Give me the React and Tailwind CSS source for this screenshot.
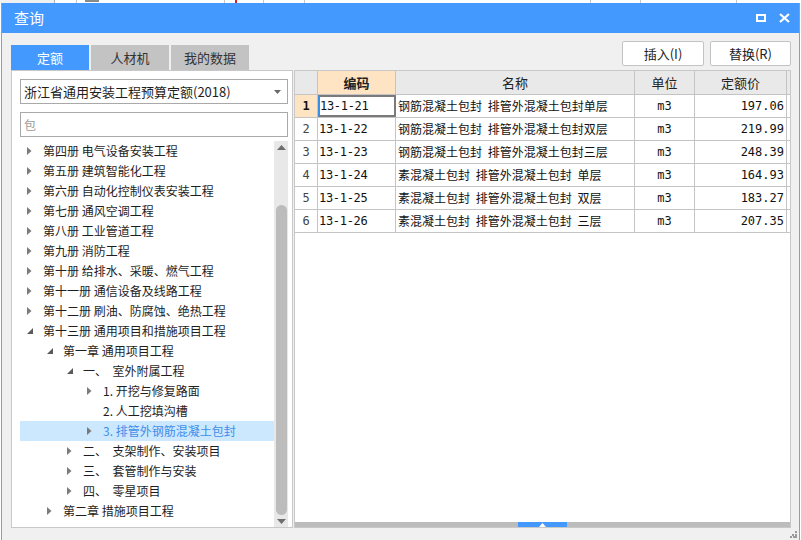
import React from 'react'

const FONT = { fontFamily: '"Noto Sans CJK SC", "Noto Sans", sans-serif' }
const MONO = { fontFamily: '"DejaVu Sans Mono", "Noto Sans CJK SC", monospace' }

const INDENT = ['pl-[7px]', 'pl-[27px]', 'pl-[47px]', 'pl-[67px]']

const treeRows = [
  { level: 0, arrow: 'right', text: '第四册 电气设备安装工程' },
  { level: 0, arrow: 'right', text: '第五册 建筑智能化工程' },
  { level: 0, arrow: 'right', text: '第六册 自动化控制仪表安装工程' },
  { level: 0, arrow: 'right', text: '第七册 通风空调工程' },
  { level: 0, arrow: 'right', text: '第八册 工业管道工程' },
  { level: 0, arrow: 'right', text: '第九册 消防工程' },
  { level: 0, arrow: 'right', text: '第十册 给排水、采暖、燃气工程' },
  { level: 0, arrow: 'right', text: '第十一册 通信设备及线路工程' },
  { level: 0, arrow: 'right', text: '第十二册 刷油、防腐蚀、绝热工程' },
  { level: 0, arrow: 'down', text: '第十三册 通用项目和措施项目工程' },
  { level: 1, arrow: 'down', text: '第一章 通用项目工程' },
  { level: 2, arrow: 'down', text: '一、\u00a0\u00a0室外附属工程' },
  { level: 3, arrow: 'right', text: '1. 开挖与修复路面' },
  { level: 3, arrow: null, text: '2. 人工挖填沟槽' },
  { level: 3, arrow: 'right', text: '3. 排管外钢筋混凝土包封', selected: true },
  { level: 2, arrow: 'right', text: '二、\u00a0\u00a0支架制作、安装项目' },
  { level: 2, arrow: 'right', text: '三、\u00a0\u00a0套管制作与安装' },
  { level: 2, arrow: 'right', text: '四、\u00a0\u00a0零星项目' },
  { level: 1, arrow: 'right', text: '第二章 措施项目工程' },
]

const tableRows = [
  ['13-1-21', '钢筋混凝土包封 排管外混凝土包封单层', 'm3', '197.06'],
  ['13-1-22', '钢筋混凝土包封 排管外混凝土包封双层', 'm3', '219.99'],
  ['13-1-23', '钢筋混凝土包封 排管外混凝土包封三层', 'm3', '248.39'],
  ['13-1-24', '素混凝土包封 排管外混凝土包封 单层', 'm3', '164.93'],
  ['13-1-25', '素混凝土包封 排管外混凝土包封 双层', 'm3', '183.27'],
  ['13-1-26', '素混凝土包封 排管外混凝土包封 三层', 'm3', '207.35'],
]

const Arrow = ({ type }) => {
  if (type === 'right') {
    return (
      <svg width="5" height="8" viewBox="0 0 5 8">
        <polygon points="0,0 4.5,4 0,8" fill="#7b7b7b" />
      </svg>
    )
  }
  if (type === 'down') {
    return (
      <svg width="6" height="6" viewBox="0 0 6 6">
        <polygon points="6,0 6,6 0,6" fill="#5a5a5a" />
      </svg>
    )
  }
  return null
}

const TreeRow = ({ row }) => (
  <div
    className={`flex h-[20px] items-center ${INDENT[row.level]} ${
      row.selected ? 'bg-[#cce8ff] text-[#3d8ee8]' : 'text-[#1e1e1e]'
    }`}
  >
    <span className="flex w-[16px] shrink-0 items-center">
      <Arrow type={row.arrow} />
    </span>
    <span className="whitespace-nowrap text-[12px] leading-none">{row.text}</span>
  </div>
)

const App = () => {
  return (
    <div className="h-[540px] w-[801px] overflow-hidden bg-white" style={FONT}>
      {/* sheet behind the dialog */}
      <div className="flex h-[3px] bg-white">
        <div className="w-[55px] border-r border-[#b0b0b0] bg-[#f0f0f0]" />
        <div className="w-[22px] border-r border-[#c8c8c8]" />
        <div className="ml-[8px] h-[2px] w-[14px] bg-[#8a8a8a]" />
        <div className="w-[126px] border-r border-[#c8c8c8]" />
        <div className="w-[12px] border-r-2 border-[#e02020]" />
        <div className="w-[27px] border-r border-[#c8c8c8]" />
        <div className="w-[41px] border-r border-[#c8c8c8]" />
        <div className="w-[286px] border-r border-[#c8c8c8]" />
        <div className="w-[50px] border-r border-[#c8c8c8]" />
        <div className="w-[96px] border-r border-[#c8c8c8]" />
      </div>

      <div className="ml-[1px] flex h-[537px] w-[799px] flex-col border-x border-[#9c9c9c]">
        {/* title bar */}
        <div className="flex h-[30px] items-center justify-between bg-[#4499ff] pl-[12px] pr-[9px] text-white">
          <span className="text-[15px]">查询</span>
          <div className="flex items-center gap-[13px]">
            <div className="h-[8px] w-[10px] border-2 border-white" />
            <svg width="11" height="10" viewBox="0 0 11 10">
              <path d="M1 1 L10 9 M10 1 L1 9" stroke="white" strokeWidth="2.2" />
            </svg>
          </div>
        </div>

        {/* body */}
        <div className="flex flex-1 flex-col bg-[#f0f0f0] pl-[9px] pr-[8px]">
          <div className="flex h-[37px] shrink-0 justify-between">
            <div className="flex shrink-0 items-end gap-[2px]">
              <div className="flex h-[25px] w-[78px] shrink-0 items-center justify-center bg-[#4499ff] text-[13px] text-white">
                定额
              </div>
              <div className="flex h-[25px] w-[78px] shrink-0 items-center justify-center bg-[#c3c3c3] text-[13px] text-[#333]">
                人材机
              </div>
              <div className="flex h-[25px] w-[78px] shrink-0 items-center justify-center bg-[#c3c3c3] text-[13px] text-[#333]">
                我的数据
              </div>
            </div>
            <div className="mt-[8px] flex shrink-0 gap-[6px]">
              <button className="h-[25px] w-[82px] rounded-[2px] border border-[#c3c3c3] bg-white text-[13px] text-[#222]">
                插入(I)
              </button>
              <button className="h-[25px] w-[81px] rounded-[2px] border border-[#c3c3c3] bg-white text-[13px] text-[#222]">
                替换(R)
              </button>
            </div>
          </div>

          <div className="flex h-[458px] shrink-0 gap-[1px]">
            {/* left panel */}
            <div className="flex w-[282px] shrink-0 flex-col border border-[#c8c8c8] bg-white pl-[8px] pr-[4px] pt-[8px]">
              <div className="flex h-[25px] items-center justify-between border border-[#a9a9a9] pl-[3px] pr-[6px]">
                <span className="text-[13px] text-[#1e1e1e]">浙江省通用安装工程预算定额(2018)</span>
                <svg width="7" height="4" viewBox="0 0 7 4">
                  <polygon points="0,0 7,0 3.5,4" fill="#6a6a6a" />
                </svg>
              </div>
              <div className="mt-[8px] flex h-[25px] items-center border border-[#a9a9a9] pl-[3px]">
                <span className="text-[12px] text-[#9a9a9a]">包</span>
              </div>
              <div className="mt-[4px] flex h-[386px]">
                <div className="flex-1">
                  {treeRows.map((row, i) => (
                    <TreeRow key={i} row={row} />
                  ))}
                </div>
                <div className="flex w-[14px] flex-col items-center bg-[#e8e8e8]">
                  <div className="flex h-[9px] items-end">
                    <svg width="9" height="5" viewBox="0 0 9 5">
                      <polygon points="0,5 9,5 4.5,0" fill="#6e6e6e" />
                    </svg>
                  </div>
                  <div className="mt-[55px] h-[310px] w-[11px] rounded-[6px] bg-[#bcbcbc]" />
                  <div className="mt-[4px] flex h-[6px] items-start">
                    <svg width="9" height="5" viewBox="0 0 9 5">
                      <polygon points="0,0 9,0 4.5,5" fill="#6e6e6e" />
                    </svg>
                  </div>
                </div>
              </div>
            </div>

            {/* right panel */}
            <div className="flex flex-1 flex-col border border-[#c8c8c8] bg-white">
              <div className="flex-1">
                <div className="flex h-[24px] border-b border-[#c4c4c4] bg-[#e9e9e9] text-[13px] text-[#222]">
                  <div className="w-[23px] border-r border-[#c4c4c4]" />
                  <div className="flex w-[78px] items-center justify-center border-r border-[#c4c4c4] bg-[#ffe4c4] font-bold">
                    编码
                  </div>
                  <div className="flex w-[239px] items-center justify-center border-r border-[#c4c4c4]">名称</div>
                  <div className="flex w-[60px] items-center justify-center border-r border-[#c4c4c4]">单位</div>
                  <div className="flex w-[92px] items-center justify-center border-r border-[#c4c4c4]">定额价</div>
                </div>
                {tableRows.map((r, i) => (
                  <div key={i} className="flex h-[23px] border-b border-[#c4c4c4] text-[12px] text-[#111]">
                    <div
                      className={`flex w-[23px] items-center justify-center border-r border-[#c4c4c4] ${
                        i === 0 ? 'bg-[#ffe4c4] font-bold' : 'bg-white text-[#444]'
                      }`}
                      style={MONO}
                    >
                      {i + 1}
                    </div>
                    <div
                      className={`flex w-[78px] items-center tracking-[-0.3px] ${
                        i === 0 ? 'border-2 border-[#7a7a7a] border-l-[#3a8ee6]' : 'border-r border-[#c4c4c4] pl-[1px]'
                      }`}
                      style={MONO}
                    >
                      {r[0]}
                    </div>
                    <div className="flex w-[239px] items-center whitespace-nowrap border-r border-[#c4c4c4] pl-[2px] [word-spacing:3px]">
                      {r[1]}
                    </div>
                    <div className="flex w-[60px] items-center justify-center border-r border-[#c4c4c4]" style={MONO}>
                      {r[2]}
                    </div>
                    <div className="flex w-[92px] items-center justify-end border-r border-[#c4c4c4] pr-[2px]" style={MONO}>
                      {r[3]}
                    </div>
                  </div>
                ))}
              </div>
              <div className="flex h-[5px] justify-center bg-[#bcbcbc]">
                <div className="flex w-[49px] items-center justify-center bg-[#4499ff]">
                  <svg width="7" height="4" viewBox="0 0 7 4">
                    <polygon points="0,4 7,4 3.5,0" fill="white" />
                  </svg>
                </div>
              </div>
            </div>
          </div>

          <div className="flex flex-1 items-end justify-end">
            <svg width="7" height="7" viewBox="0 0 7 7" className="mb-[2px] mr-[-6px]">
              <rect x="5" y="0" width="2" height="2" fill="#9a9a9a" />
              <rect x="2" y="3" width="2" height="2" fill="#9a9a9a" />
              <rect x="5" y="3" width="2" height="2" fill="#9a9a9a" />
              <rect x="0" y="5" width="2" height="2" fill="#9a9a9a" />
              <rect x="3" y="5" width="2" height="2" fill="#9a9a9a" />
              <rect x="5" y="5" width="2" height="2" fill="#9a9a9a" />
            </svg>
          </div>
        </div>
      </div>
    </div>
  )
}

export default App
